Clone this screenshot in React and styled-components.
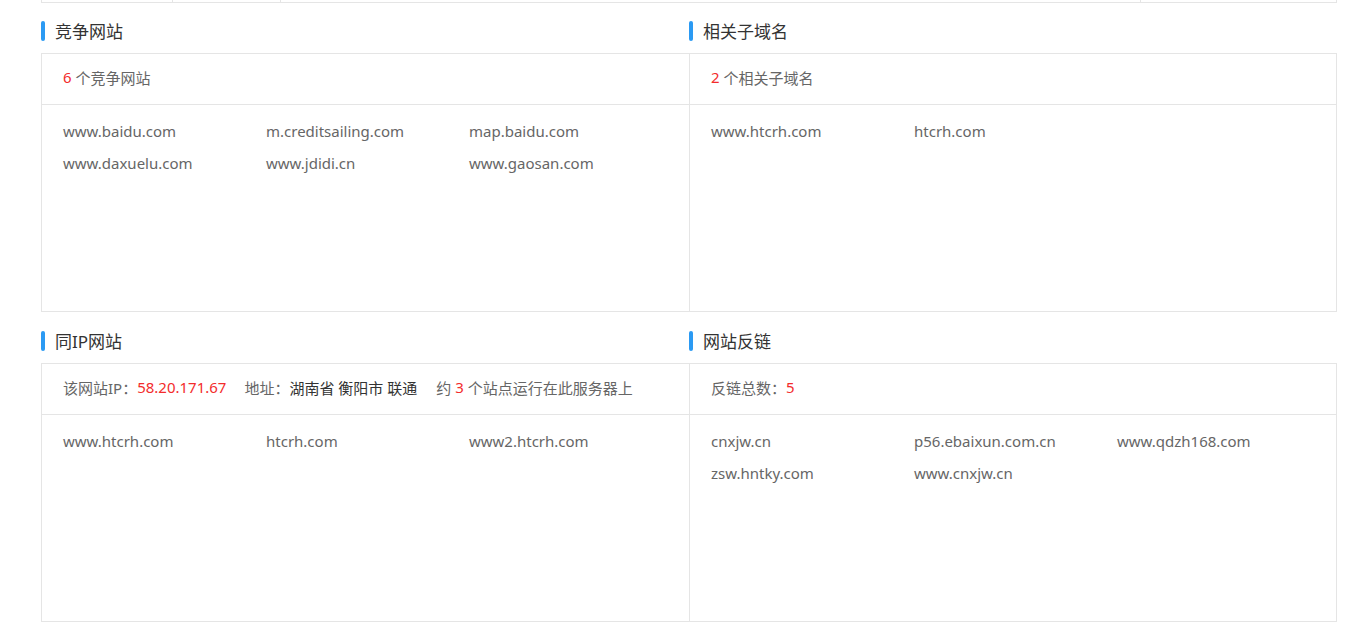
import React from "react";
import styled, { createGlobalStyle } from "styled-components";

const GlobalStyle = createGlobalStyle`
  html, body {
    margin: 0;
    padding: 0;
    background: #fff;
  }
  body {
    font-family: "Microsoft YaHei", "Noto Sans", "Noto Sans CJK SC", sans-serif;
    color: #666;
  }
`;

const Page = styled.div`
  width: 1296px;
  margin-left: 41px;
`;

// 上一块表格留下的底边
const TableTail = styled.div`
  display: flex;
  height: 2px;
  border-bottom: 1px solid #e5e5e5;
`;

const TailCell = styled.div`
  width: ${(p) => p.w}px;
  height: 100%;
  border-left: 1px solid #e5e5e5;
  box-sizing: border-box;

  &:last-child {
    border-right: 1px solid #e5e5e5;
  }
`;

const Grid = styled.div`
  display: grid;
  grid-template-columns: 648px 648px;
`;

const Section = styled.div`
  display: flex;
  flex-direction: column;
`;

const Title = styled.div`
  display: flex;
  align-items: center;
  box-sizing: border-box;
  height: ${(p) => (p.lower ? 51 : 50)}px;
  padding-top: ${(p) => (p.lower ? 6 : 5)}px;
  font-size: 17px;
  color: #333;

  &::before {
    content: "";
    width: 4px;
    height: 20px;
    border-radius: 2px;
    background: #2b9af3;
    margin-right: 10px;
  }
`;

const Panel = styled.div`
  border: 1px solid #e5e5e5;
  border-right: ${(p) => (p.left ? "none" : "1px solid #e5e5e5")};
`;

const PanelHead = styled.div`
  display: flex;
  align-items: center;
  box-sizing: border-box;
  height: 51px;
  padding: 0 0 4px 21px;
  font-size: 15px;
  color: #666;
  border-bottom: 1px solid #e5e5e5;
  white-space: pre;
`;

const Red = styled.span`
  color: #f32c2c;
`;

const Dark = styled.span`
  color: #333;
`;

const Gap = styled.span`
  display: inline-block;
  width: ${(p) => p.w}px;
`;

const PanelBody = styled.div`
  display: grid;
  grid-template-columns: repeat(3, 203px);
  align-content: start;
  height: 196px;
  padding: 10px 0 0 21px;
`;

const Site = styled.div`
  font-size: 15px;
  line-height: 32px;
  color: #666;
  white-space: nowrap;
`;

const SiteList = ({ items }) => (
  <PanelBody>
    {items.map((s) => (
      <Site key={s}>{s}</Site>
    ))}
  </PanelBody>
);

const App = () => {
  return (
    <>
      <GlobalStyle />
      <Page>
        <TableTail>
          <TailCell w={131} />
          <TailCell w={108} />
          <TailCell w={860} />
          <TailCell w={197} />
        </TableTail>

        <Grid>
          <Section>
            <Title>竞争网站</Title>
            <Panel left>
              <PanelHead>
                <Red>6</Red> 个竞争网站
              </PanelHead>
              <SiteList
                items={[
                  "www.baidu.com",
                  "m.creditsailing.com",
                  "map.baidu.com",
                  "www.daxuelu.com",
                  "www.jdidi.cn",
                  "www.gaosan.com",
                ]}
              />
            </Panel>
          </Section>

          <Section>
            <Title>相关子域名</Title>
            <Panel>
              <PanelHead>
                <Red>2</Red> 个相关子域名
              </PanelHead>
              <SiteList items={["www.htcrh.com", "htcrh.com"]} />
            </Panel>
          </Section>

          <Section>
            <Title lower>同IP网站</Title>
            <Panel left>
              <PanelHead>
                该网站IP：<Red>58.20.171.67</Red>
                <Gap w={18} />
                地址：<Dark>湖南省 衡阳市 联通</Dark>
                <Gap w={19} />
                约 <Red>3</Red> 个站点运行在此服务器上
              </PanelHead>
              <SiteList items={["www.htcrh.com", "htcrh.com", "www2.htcrh.com"]} />
            </Panel>
          </Section>

          <Section>
            <Title lower>网站反链</Title>
            <Panel>
              <PanelHead>
                反链总数：<Red>5</Red>
              </PanelHead>
              <SiteList
                items={[
                  "cnxjw.cn",
                  "p56.ebaixun.com.cn",
                  "www.qdzh168.com",
                  "zsw.hntky.com",
                  "www.cnxjw.cn",
                ]}
              />
            </Panel>
          </Section>
        </Grid>
      </Page>
    </>
  );
};

export default App;
